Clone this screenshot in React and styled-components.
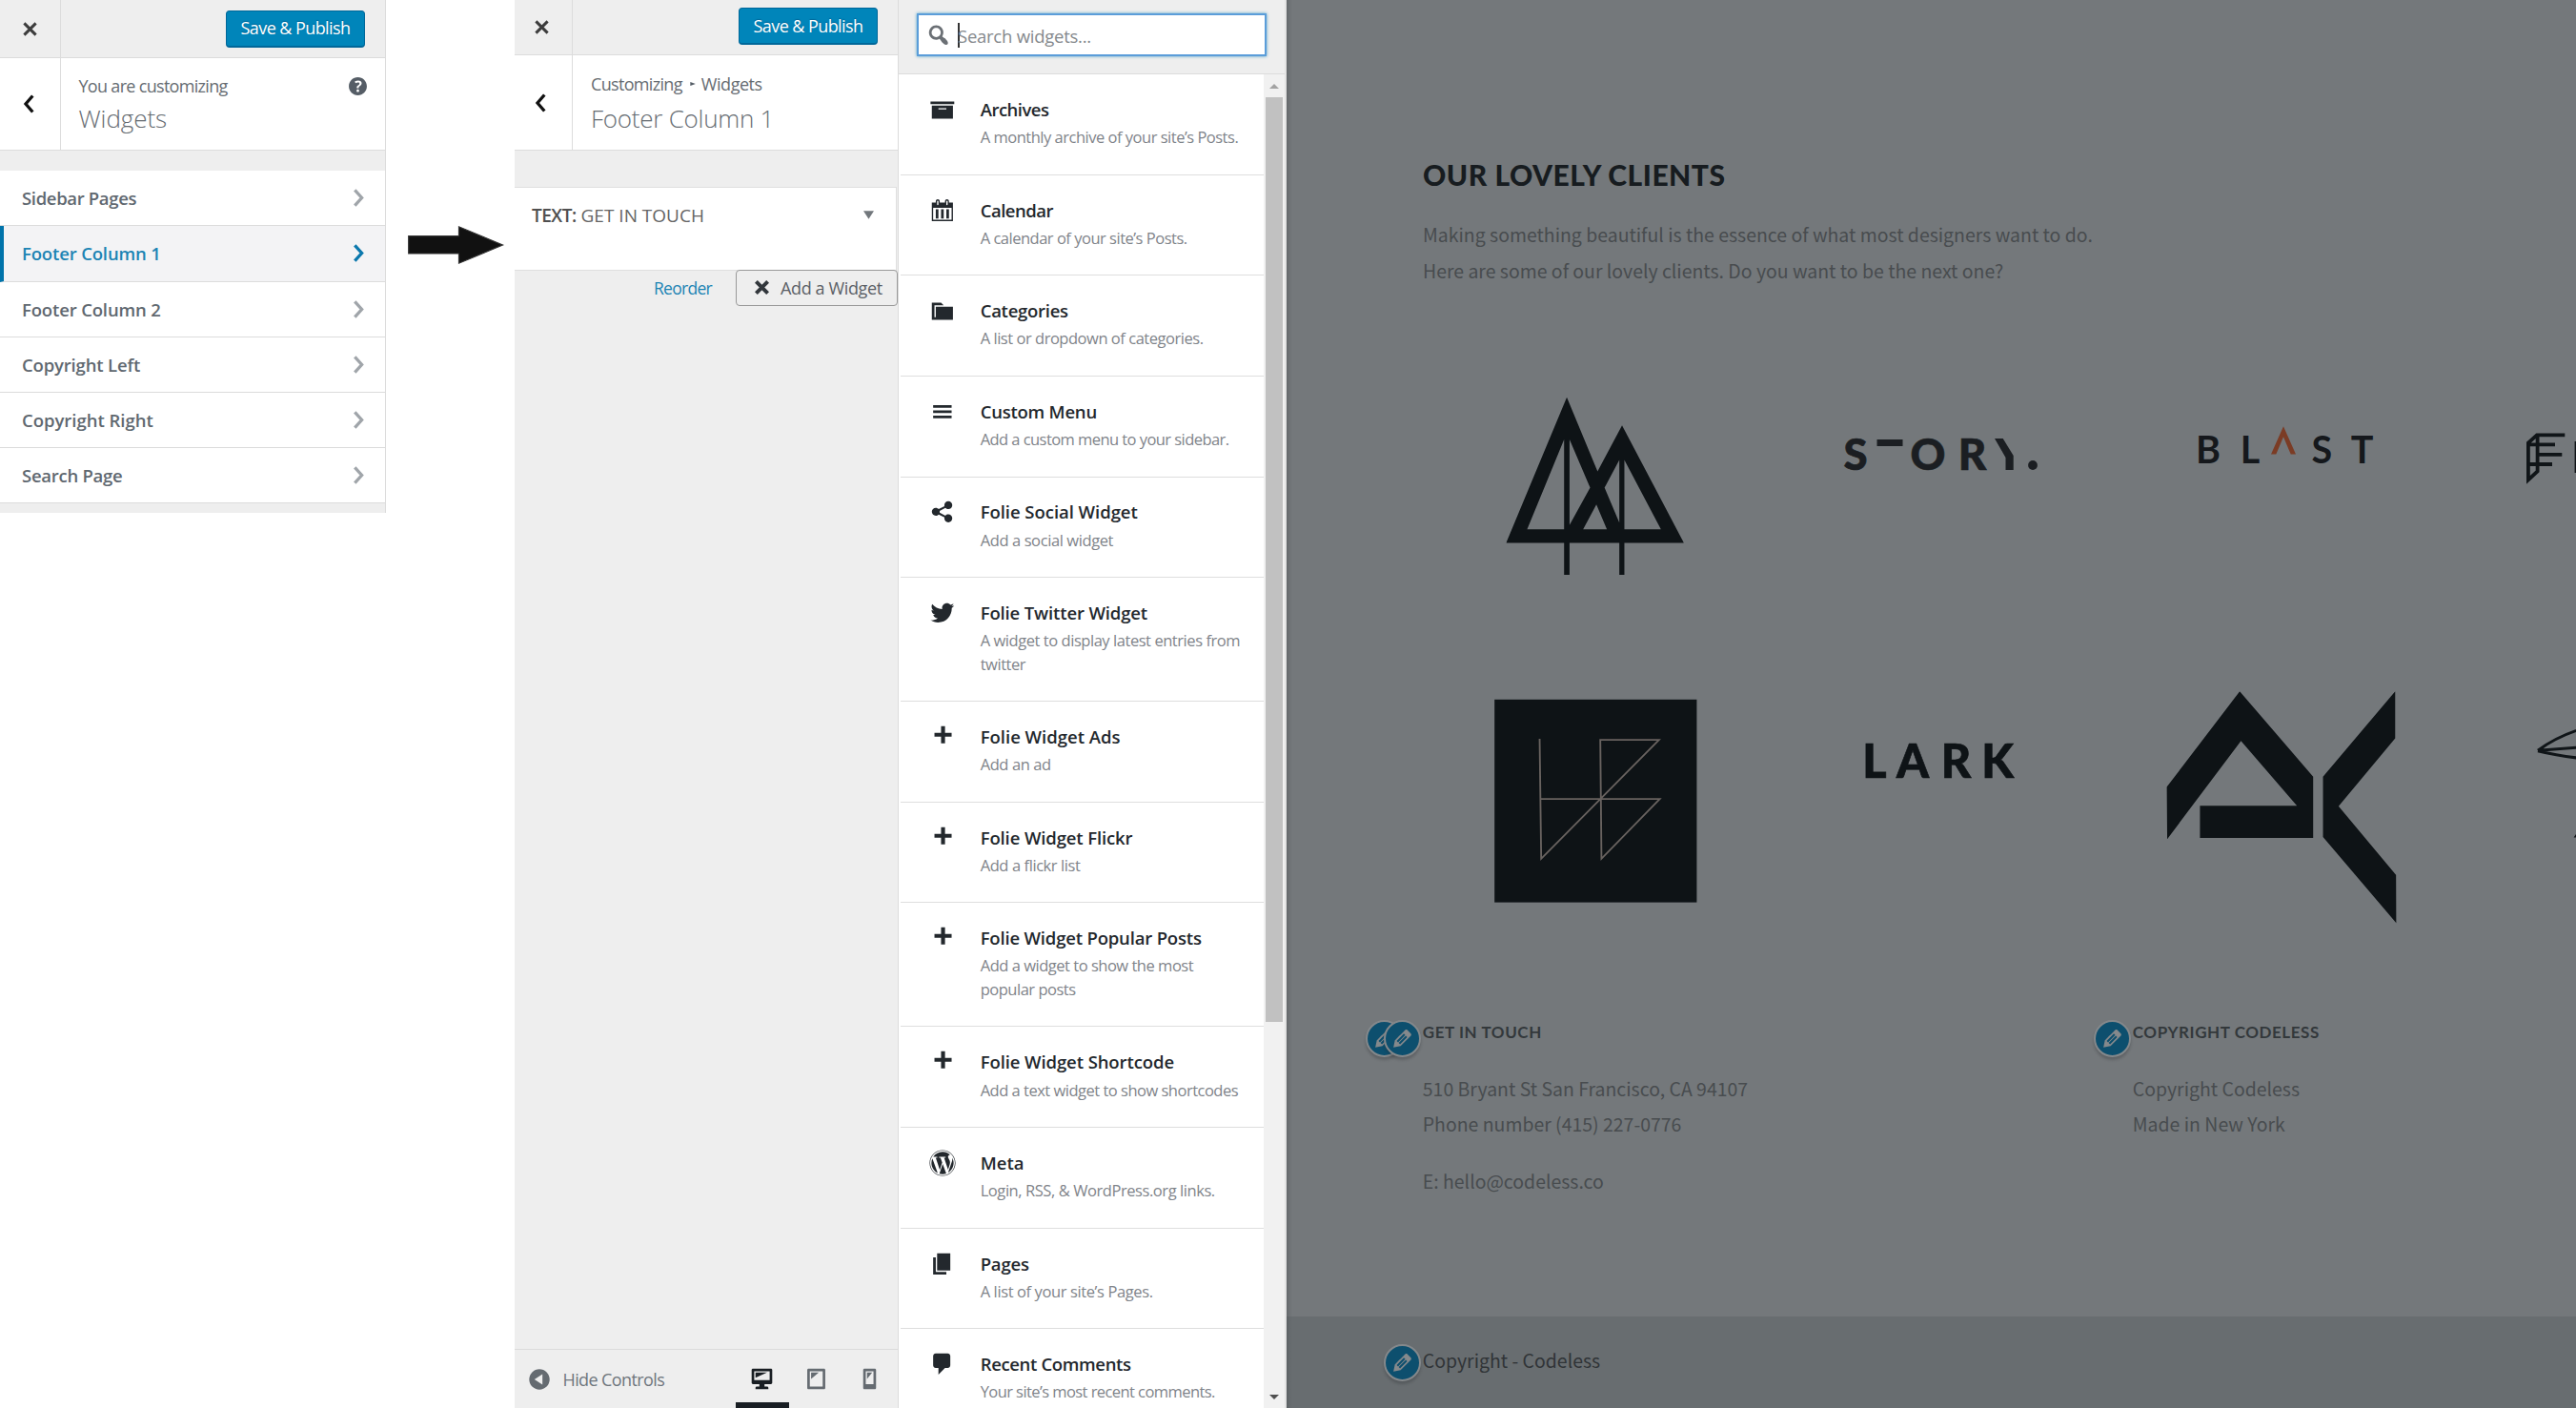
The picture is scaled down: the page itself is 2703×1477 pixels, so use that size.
import React from 'react';
import styled, { createGlobalStyle, css } from 'styled-components';
import { FaWordpress } from 'react-icons/fa';

const uiFont = '"Open Sans", "Noto Sans", sans-serif';
const headFont = 'Lato, Inter, sans-serif';
const bodyFont = '"Noto Sans CJK SC", "Open Sans", sans-serif';

const GlobalStyle = createGlobalStyle`
  * { box-sizing: border-box; }
  body { margin: 0; background: #fff; }
  h1, h2, h3, p, ul { margin: 0; padding: 0; font-weight: inherit; }
`;

const Page = styled.div`
  display: flex;
  align-items: flex-start;
  width: 2703px;
  height: 1477px;
  overflow: hidden;
  background: #fff;
  font-family: ${uiFont};
`;

const Text = styled.span`
  letter-spacing: ${(p) => p.$track || 0}px;
  white-space: nowrap;
`;

/* ---------- customizer panels ---------- */

const Panel = styled.section`
  display: flex;
  flex-direction: column;
  flex: none;
  width: ${(p) => p.$width}px;
  height: ${(p) => p.$height}px;
  background: #eee;
  border-right: 1px solid #dcdcdc;
`;

const TopBar = styled.header`
  display: flex;
  align-items: center;
  justify-content: space-between;
  flex: none;
  height: ${(p) => p.$height}px;
  padding-right: 21px;
  border-bottom: 1px solid #dcdcdc;
`;

const SideCell = styled.div`
  display: flex;
  align-items: center;
  justify-content: center;
  align-self: stretch;
  flex: none;
  width: ${(p) => p.$width}px;
  padding-right: ${(p) => p.$shift || 0}px;
  border-right: 1px solid #dcdcdc;
`;

const SaveButton = styled.button`
  width: 146px;
  height: 39px;
  margin: 0;
  padding: 0 0 1px;
  border: 1px solid #006799;
  border-bottom-width: 2px;
  border-radius: 4px;
  background: #0085ba;
  color: #fff;
  font: 500 18px/34px ${uiFont};
  text-shadow: 0 -1px 1px #006799;
  transform: translateY(${(p) => p.$lift || 0}px);
`;

const PanelHead = styled.div`
  display: flex;
  flex: none;
  height: ${(p) => p.$height}px;
  background: #fff;
  border-bottom: 1px solid #dcdcdc;
`;

const HeadText = styled.div`
  flex: 1;
  padding: ${(p) => p.$top}px 0 0 19px;
  color: #666c72;
`;

const Crumbs = styled.p`
  display: flex;
  align-items: center;
  font-size: 18px;
  line-height: 24px;
`;

const CrumbArrow = styled.svg`
  width: 6px;
  height: 6px;
  margin: 0 6px 0 8px;
  fill: #555d66;
`;

const PanelTitle = styled.h2`
  margin-top: ${(p) => p.$gap}px;
  font-size: 26px;
  font-weight: 300;
  line-height: 34px;
`;

const HelpCell = styled.div`
  padding: 16px 15px 0 0;
`;

const SectionList = styled.ul`
  list-style: none;
  margin-top: 21.7px;
`;

const SectionItem = styled.li`
  display: flex;
  align-items: center;
  justify-content: space-between;
  height: 58.2px;
  padding: 0 22px 0 23px;
  border-bottom: 1px solid #dcdcdc;
  background: #fff;
  color: #606870;
  font-size: 18.5px;
  font-weight: 600;
  svg { stroke: #a0a5aa; }
  ${(p) => p.$active && css`
    padding-left: 19px;
    border-left: 4px solid #0073aa;
    background: #f3f3f5;
    color: #1c84b4;
    svg { stroke: #0b78ad; }
  `}
`;

const ArrowSlot = styled.div`
  flex: none;
  width: 135px;
  padding: 236px 0 0 23px;
  line-height: 0;
`;

/* ---------- widget section panel ---------- */

const WidgetCard = styled.div`
  flex: none;
  width: 401px;
  height: 88px;
  margin-top: 37.5px;
  border: solid #dfdfdf;
  border-width: 1px 1px 1px 0;
  background: #fff;
`;

const WidgetCardHead = styled.div`
  display: flex;
  align-items: center;
  justify-content: space-between;
  height: 58px;
  padding: 0 23px 0 18px;
  font-size: 19px;
  color: #646464;
  strong { font-weight: 600; color: #505050; }
`;

const WidgetActions = styled.div`
  display: flex;
  align-items: center;
  justify-content: flex-end;
  flex: none;
  margin-top: -1px;
`;

const ReorderLink = styled.a`
  margin-right: 25px;
  color: #1c84b4;
  font-size: 17.5px;
`;

const AddButton = styled.button`
  display: flex;
  align-items: center;
  width: 170px;
  height: 38px;
  padding: 0 0 0 19px;
  border: 1.5px solid #999;
  border-radius: 4px;
  background: #eee;
  color: #5b6066;
  font: 400 18px/24px ${uiFont};
  svg { margin-right: 12px; }
`;

const PanelFooter = styled.footer`
  display: flex;
  align-items: center;
  flex: none;
  height: 62px;
  margin-top: auto;
  padding: 0 1px 0 15px;
  border-top: 1px solid #dcdcdc;
  color: #6f767d;
  font-size: 18px;
`;

const HideControls = styled.div`
  display: flex;
  align-items: center;
  gap: 13.5px;
  flex: 1;
  padding-top: 1px;
`;

const DeviceButton = styled.div`
  display: flex;
  align-items: center;
  justify-content: center;
  width: 56.5px;
  height: 61px;
  padding-top: 6px;
  border-bottom: 6px solid ${(p) => (p.$active ? '#191e23' : 'transparent')};
  color: ${(p) => (p.$active ? '#191e23' : '#656b71')};
`;

/* ---------- available widgets ---------- */

const Available = styled.section`
  display: flex;
  flex-direction: column;
  flex: none;
  width: 407px;
  height: 1477px;
  background: #fff;
  border-right: 2px solid #e2e2e2;
`;

const SearchBar = styled.div`
  flex: none;
  height: 78px;
  padding: 14px 0 0 19px;
  background: #eee;
  border-bottom: 1px solid #dcdcdc;
`;

const SearchBox = styled.div`
  display: flex;
  align-items: center;
  width: 367px;
  height: 45px;
  padding-left: 7px;
  border: 2px solid #5b9dd9;
  background: #fff;
  box-shadow: 0 0 3px rgba(30, 140, 190, 0.8);
  color: #85898d;
  font-size: 18.5px;
`;

const Caret = styled.i`
  width: 1.5px;
  height: 26px;
  margin: 0 -1.5px 0 6.5px;
  background: #333;
`;

const SearchHint = styled(Text)`
  padding-top: 2px;
`;

const ListArea = styled.div`
  display: flex;
  flex: 1;
  min-height: 0;
`;

const WidgetList = styled.ul`
  flex: 1;
  margin-left: 2px;
  overflow: hidden;
  list-style: none;
`;

const WidgetRow = styled.li`
  display: grid;
  grid-template-columns: 27.7px 1fr;
  column-gap: 26.4px;
  align-items: start;
  padding: 24.9px 0 26.15px 29.6px;
  border-bottom: 1px solid #dedede;
  color: #23282d;
`;

const WidgetIcon = styled.span`
  margin-top: -2px;
  line-height: 0;
`;

const WidgetName = styled.h3`
  font-size: 18.5px;
  font-weight: 600;
  line-height: 24px;
`;

const WidgetDesc = styled.p`
  display: flex;
  flex-direction: column;
  margin-top: 5.2px;
  font-size: 16.5px;
  line-height: 24.4px;
  color: #7f848a;
`;

const ScrollBar = styled.div`
  display: flex;
  flex-direction: column;
  align-items: center;
  width: 22px;
  padding: 10px 0 9px;
  background: #f1f1f1;
`;

const ScrollThumb = styled.div`
  width: 18px;
  height: 970px;
  margin: 9px 0 auto;
  background: #c1c1c1;
`;

/* ---------- dimmed site preview ---------- */

const Preview = styled.main`
  display: flex;
  flex-direction: column;
  flex: 1;
  min-width: 0;
  height: 1477px;
  overflow: hidden;
  background: linear-gradient(90deg, #64686b 0, #6e7275 3px, #74787b 6px);
  font-family: ${bodyFont};
  font-size: 19.47px;
  line-height: 37.6px;
  color: #484c4f;
`;

const Intro = styled.div`
  height: 400px;
  padding: 163px 0 0 143px;
`;

const IntroTitle = styled.h1`
  margin-bottom: 24.4px;
  font: 900 30px/40px ${headFont};
  color: #171c20;
`;

const Line = styled.p`
  white-space: nowrap;
  margin-top: ${(p) => p.$gap || 0}px;
`;

const LogoGrid = styled.div`
  display: grid;
  grid-template-columns: repeat(4, 362px);
  grid-template-rows: 300px 290px;
  padding-left: 143px;
  svg { display: block; }
`;

const LogoText = styled.text`
  font-family: ${headFont};
  font-weight: ${(p) => p.$weight};
  font-size: ${(p) => p.$size}px;
  text-anchor: middle;
`;

const FooterWidgets = styled.div`
  display: grid;
  grid-template-columns: 745px 1fr;
  flex: 1;
  padding: 80.5px 0 0 142.8px;
`;

const FooterWidget = styled.div`
  position: relative;
`;

const FooterTitle = styled.h3`
  margin-bottom: 28.4px;
  font: 700 17px/24px ${headFont};
  color: #33383b;
`;

const CopyrightBar = styled.div`
  display: flex;
  align-items: center;
  height: 96px;
  padding: 0 0 4px 142.8px;
  background: linear-gradient(90deg, #5b6063 0, #64696c 3px, #686d70 6px);
  color: #303437;
`;

const CopyrightText = styled.div`
  position: relative;
`;

const EditBadge = styled.span`
  position: absolute;
  left: ${(p) => p.$left}px;
  top: ${(p) => p.$top}px;
  display: flex;
  align-items: center;
  justify-content: center;
  width: 39px;
  height: 39px;
  border: 2px solid #84888b;
  border-radius: 50%;
  background: #0d4f6e;
  color: #85898c;
  box-shadow: 0 3px 3px rgba(40, 44, 48, 0.28);
`;

/* ---------- icons on a 20-unit grid ---------- */

const glyphs = {
  archive: 'M19 4v2H1V4h18zM2 7h16v10H2V7zm11 3V9H7v1h6z',
  calendar:
    'M15 4h3v14H2V4h3V3c0-.83.67-1.5 1.5-1.5S8 2.17 8 3v1h4V3c0-.83.67-1.5 1.5-1.5S15 2.17 15 3v1zM6 3v2.5c0 .28.22.5.5.5s.5-.22.5-.5V3c0-.28-.22-.5-.5-.5S6 2.72 6 3zm7 0v2.5c0 .28.22.5.5.5s.5-.22.5-.5V3c0-.28-.22-.5-.5-.5s-.5.22-.5.5zm4 14V8H3v9h14zM7 16V9H5v7h2zm4 0V9H9v7h2zm4 0V9h-2v7h2z',
  category: 'M5 7h13v10H2V4h7l2 2H4v9h1V7z',
  menu: 'M17 7V5H3v2h14zm0 4V9H3v2h14zm0 4v-2H3v2h14z',
  share:
    'M14.5 12c1.66 0 3 1.34 3 3s-1.34 3-3 3-3-1.34-3-3c0-.24.03-.46.09-.69l-4.38-2.3c-.55.61-1.33.99-2.21.99-1.66 0-3-1.34-3-3s1.34-3 3-3c.88 0 1.66.39 2.21.99l4.38-2.3c-.06-.23-.09-.45-.09-.69 0-1.66 1.34-3 3-3s3 1.34 3 3-1.34 3-3 3c-.88 0-1.66-.39-2.21-.99l-4.38 2.3c.06.23.09.45.09.69s-.03.46-.09.69l4.38 2.3c.55-.61 1.33-.99 2.21-.99z',
  twitter:
    'M18.94 4.46c-.49.73-1.11 1.38-1.83 1.9.01.15.01.31.01.47 0 4.85-3.69 10.44-10.43 10.44-2.07 0-4-.61-5.63-1.65.29.03.58.05.88.05 1.72 0 3.3-.59 4.55-1.57-1.6-.03-2.95-1.09-3.42-2.55.22.04.45.07.69.07.33 0 .66-.05.96-.13-1.67-.34-2.94-1.82-2.94-3.6v-.04c.5.27 1.06.44 1.66.46-.98-.66-1.63-1.78-1.63-3.06 0-.67.18-1.3.5-1.84 1.81 2.22 4.51 3.68 7.56 3.83-.06-.27-.1-.55-.1-.84 0-2.02 1.65-3.66 3.67-3.66 1.06 0 2.01.44 2.68 1.16.83-.17 1.62-.47 2.33-.88-.28.85-.86 1.57-1.62 2.02.75-.08 1.45-.28 2.11-.57z',
  plus: 'M17 7v3h-5v5H9v-5H4V7h5V2h3v5h5z',
  pages: 'M6 15V2h10v13H6zm-1 1h8v2H3V5h2v11z',
  comment: 'M5 2h9c1.1 0 2 .9 2 2v7c0 1.1-.9 2-2 2h-2l-5 5v-5H5c-1.1 0-2-.9-2-2V4c0-1.1.9-2 2-2z',
  search:
    'M12.14 4.18c1.87 1.87 2.11 4.75.72 6.89.12.1.22.21.36.31.2.16.47.36.81.59.34.24.56.39.66.47.42.31.73.57.94.78.32.32.6.65.84 1 .25.35.44.69.59 1.04.14.35.21.68.18 1-.02.32-.14.59-.36.81s-.49.34-.81.36c-.31.02-.65-.04-.99-.19-.35-.14-.7-.34-1.04-.59-.35-.24-.68-.52-1-.84-.21-.21-.47-.52-.77-.93-.1-.13-.25-.35-.47-.66-.22-.32-.4-.57-.56-.78-.16-.2-.29-.35-.44-.5-2.07 1.09-4.69.76-6.44-.98-2.14-2.15-2.14-5.64 0-7.78 2.15-2.15 5.63-2.15 7.78 0zm-1.41 6.36c1.36-1.37 1.36-3.58 0-4.95-1.37-1.37-3.59-1.37-4.95 0-1.37 1.37-1.37 3.58 0 4.95 1.36 1.37 3.58 1.37 4.95 0z',
  help: 'M17 10c0-3.87-3.14-7-7-7-3.87 0-7 3.13-7 7s3.13 7 7 7c3.86 0 7-3.13 7-7zm-6.3 1.48H9.14v-.43c0-.38.08-.7.24-.98s.46-.57.88-.89c.41-.29.68-.53.81-.71.14-.18.2-.39.2-.62 0-.25-.09-.44-.28-.58-.19-.13-.45-.19-.79-.19-.58 0-1.25.15-1.99.45l-.64-1.28c.87-.49 1.8-.74 2.77-.74.81 0 1.45.2 1.92.58.48.39.71.91.71 1.55 0 .43-.09.8-.29 1.11-.19.32-.57.67-1.11 1.06-.38.28-.61.49-.71.63-.1.15-.15.34-.15.57v.47zm-1.47 2.74c-.18-.17-.27-.42-.27-.73 0-.33.08-.58.26-.75s.43-.25.77-.25c.32 0 .57.09.75.26s.27.42.27.74c0 .3-.09.55-.27.72-.18.18-.43.27-.75.27-.33 0-.58-.09-.76-.26z',
  desktop:
    'M3 2h14c.55 0 1 .45 1 1v10c0 .55-.45 1-1 1h-5v2h2c.55 0 1 .45 1 1v1H5v-1c0-.55.45-1 1-1h2v-2H3c-.55 0-1-.45-1-1V3c0-.55.45-1 1-1zm13 9V4H4v7h12zM5 5h9L5 9V5z',
  tablet:
    'M4 2h12c.55 0 1 .45 1 1v14c0 .55-.45 1-1 1H4c-.55 0-1-.45-1-1V3c0-.55.45-1 1-1zm11 14V4H5v12h10zM6 5h6l-6 5V5z',
  phone:
    'M6 2h8c.55 0 1 .45 1 1v14c0 .55-.45 1-1 1H6c-.55 0-1-.45-1-1V3c0-.55.45-1 1-1zm7 12V4H7v10h6zM8 5h4l-4 5V5z',
  edit: 'M13.89 3.39l2.71 2.72c.46.46.42 1.24.03 1.64l-8.01 8.02-5.56 1.16 1.16-5.58s7.6-7.63 7.99-8.03c.39-.39 1.22-.39 1.68.07zm-2.73 2.79l-5.59 5.61 1.11 1.11 5.54-5.65zm-2.97 8.23l5.58-5.6-1.07-1.08-5.59 5.6z',
};

const Glyph = ({ name, size = 27.7, color = 'currentColor' }) => (
  <svg width={size} height={size} viewBox="0 0 20 20" fill={color}>
    <path d={glyphs[name]} fillRule="evenodd" />
  </svg>
);

const Cross = ({ weight = 3, color = '#3c3c3c' }) => (
  <svg width="15" height="15" viewBox="0 0 15 15" stroke={color} strokeWidth={weight}>
    <path d="M1.4 1.4 13.6 13.6M13.6 1.4 1.4 13.6" />
  </svg>
);

const BackChevron = () => (
  <svg width="12" height="20" viewBox="0 0 12 20" fill="none" stroke="#111" strokeWidth="3.3">
    <path d="M10.3 1.5 3 10l7.3 8.5" />
  </svg>
);

const NextChevron = () => (
  <svg width="11" height="19" viewBox="0 0 11 19" fill="none" strokeWidth="3.3">
    <path d="M1.3 1.4 8.6 9.5 1.3 17.6" />
  </svg>
);

/* ---------- data ---------- */

const sections = [
  { name: 'Sidebar Pages', track: -0.34 },
  { name: 'Footer Column 1', track: -0.15, active: true },
  { name: 'Footer Column 2', track: -0.15 },
  { name: 'Copyright Left', track: -0.16 },
  { name: 'Copyright Right', track: -0.02 },
  { name: 'Search Page', track: -0.26 },
];

const widgets = [
  { icon: 'archive', name: 'Archives', nt: -0.5, desc: ['A monthly archive of your site’s Posts.'], dt: -0.49 },
  { icon: 'calendar', name: 'Calendar', nt: -0.5, desc: ['A calendar of your site’s Posts.'], dt: -0.49 },
  { icon: 'category', name: 'Categories', nt: -0.27, desc: ['A list or dropdown of categories.'], dt: -0.47 },
  { icon: 'menu', name: 'Custom Menu', nt: -0.23, desc: ['Add a custom menu to your sidebar.'], dt: -0.56 },
  { icon: 'share', name: 'Folie Social Widget', nt: -0.04, desc: ['Add a social widget'], dt: -0.4 },
  { icon: 'twitter', name: 'Folie Twitter Widget', nt: -0.14, desc: ['A widget to display latest entries from', 'twitter'], dt: -0.45 },
  { icon: 'plus', name: 'Folie Widget Ads', nt: 0, desc: ['Add an ad'], dt: -0.42 },
  { icon: 'plus', name: 'Folie Widget Flickr', nt: -0.12, desc: ['Add a flickr list'], dt: -0.42 },
  { icon: 'plus', name: 'Folie Widget Popular Posts', nt: -0.18, desc: ['Add a widget to show the most', 'popular posts'], dt: -0.48 },
  { icon: 'plus', name: 'Folie Widget Shortcode', nt: -0.09, desc: ['Add a text widget to show shortcodes'], dt: -0.5 },
  { icon: 'wordpress', name: 'Meta', nt: 0, desc: ['Login, RSS, & WordPress.org links.'], dt: -0.43 },
  { icon: 'pages', name: 'Pages', nt: -0.18, desc: ['A list of your site’s Pages.'], dt: -0.39 },
  { icon: 'comment', name: 'Recent Comments', nt: -0.35, desc: ['Your site’s most recent comments.'], dt: -0.57 },
];

/* ---------- client logos ---------- */

const TreesLogo = () => (
  <svg width="362" height="300" viewBox="1493 400 362 300">
    <svg x="1580.4" y="416.7" width="186.5" height="186.4" viewBox="99 96 457 487" preserveAspectRatio="none">
      <path
        fill="#0e1316"
        fillRule="evenodd"
        d="M255 96 334 299 397 173 556 495H403V583H390V495H262V583H248V495H99ZM153 458H248V212ZM262 212V446L315 344ZM331 390 297 458H358ZM390 268 352 344 390 440ZM403 268V458H497Z"
      />
    </svg>
  </svg>
);

const StoryLogo = () => (
  <svg width="362" height="300" viewBox="1855 400 362 300" fill="#1b1e22" stroke="#1b1e22">
    <LogoText x="1947" y="492.6" $size={45.5} $weight={900} strokeWidth="0.7">S</LogoText>
    <rect x="1969.5" y="461" width="27" height="7" stroke="none" />
    <LogoText x="2023" y="492.6" $size={45.5} $weight={900} strokeWidth="0.7">O</LogoText>
    <LogoText x="2069.5" y="492.6" $size={45.5} $weight={900} strokeWidth="0.7">R</LogoText>
    <path stroke="none" d="M2093 460H2101.7L2112.7 478V492.9H2104.5V480Z" />
    <circle stroke="none" cx="2133" cy="488" r="4.9" />
  </svg>
);

const BlastLogo = () => (
  <svg width="362" height="300" viewBox="2217 400 362 300" fill="#15181c">
    <LogoText x="2317" y="486.4" $size={39.5} $weight={700}>B</LogoText>
    <LogoText x="2361" y="486.4" $size={39.5} $weight={700}>L</LogoText>
    <path fill="#7b3c25" d="M2396 447.3 2409 476.4H2403.7L2396 458.3 2388.3 476.4H2383Z" />
    <LogoText x="2436.3" y="486.4" $size={39.5} $weight={700}>S</LogoText>
    <LogoText x="2478.5" y="486.4" $size={39.5} $weight={700}>T</LogoText>
  </svg>
);

const PrismLogo = () => (
  <svg width="362" height="300" viewBox="2579 400 362 300" fill="none" stroke="#101518" strokeWidth="3.8">
    <path d="M2691.3 456.3H2662L2652.9 464.5V503.5L2662.6 494.5V456.3M2653 466.3H2681M2663 476.9H2688.3M2653 487H2678" />
    <path d="M2703.5 463V496" />
  </svg>
);

const SquareLogo = () => (
  <svg width="362" height="290" viewBox="1493 700 362 290">
    <rect x="1568.2" y="733.8" width="212.2" height="212.8" fill="#0e1316" />
    <svg x="1568.2" y="733.6" width="212.2" height="213.1" viewBox="69 924 520 557" preserveAspectRatio="none">
      <path
        fill="none"
        stroke="#68625f"
        strokeWidth="4.6"
        d="M185 1032 189 1361 492 1035H341L344 1361 494 1197H189"
      />
    </svg>
  </svg>
);

const LarkLogo = () => (
  <svg width="362" height="290" viewBox="1855 700 362 290" fill="#0e1316" stroke="#0e1316" strokeWidth="0.7">
    <LogoText x="1967" y="816.3" $size={48.5} $weight={900}>L</LogoText>
    <LogoText x="2007" y="816.3" $size={48.5} $weight={900}>A</LogoText>
    <LogoText x="2052.5" y="816.3" $size={48.5} $weight={900}>R</LogoText>
    <LogoText x="2096" y="816.3" $size={48.5} $weight={900}>K</LogoText>
  </svg>
);

const AngleLogo = () => (
  <svg width="362" height="290" viewBox="2217 700 362 290">
    <svg x="2273.4" y="725.2" width="241.2" height="243.4" viewBox="280 902 723 636" preserveAspectRatio="none" fill="#0e1316">
      <path d="M510 902 741 1136V1304H385V1216H690L514 1038 282 1307 280 1165Z" />
      <path d="M999 902V1031L821 1217 1002 1406 1003 1538 772 1301V1136Z" />
    </svg>
  </svg>
);

const PlaneLogo = () => (
  <svg width="362" height="290" viewBox="2579 700 362 290" fill="none" stroke="#101518" strokeWidth="3">
    <path d="M2720 761.5C2698 767 2678 776 2663 787.3M2720 783 2663 787.3M2720 796.5C2700 795 2680 792 2663 787.8" />
    <path fill="#101518" stroke="none" d="M2700.6 878.5 2708 868V878.5Z" />
  </svg>
);

/* ---------- page ---------- */

const WidgetsPanel = () => (
  <Panel $width={405} $height={538}>
    <TopBar $height={61}>
      <SideCell $width={63.5}><Cross /></SideCell>
      <SaveButton><Text $track={-0.58}>Save &amp; Publish</Text></SaveButton>
    </TopBar>
    <PanelHead $height={96.5}>
      <SideCell $width={63.5} $shift={2}><BackChevron /></SideCell>
      <HeadText $top={17}>
        <Crumbs><Text $track={-0.69}>You are customizing</Text></Crumbs>
        <PanelTitle $gap={5}><Text $track={-0.07}>Widgets</Text></PanelTitle>
      </HeadText>
      <HelpCell><Glyph name="help" size={27} color="#555d66" /></HelpCell>
    </PanelHead>
    <SectionList>
      {sections.map((s) => (
        <SectionItem key={s.name} $active={s.active}>
          <Text $track={s.track}>{s.name}</Text>
          <NextChevron />
        </SectionItem>
      ))}
    </SectionList>
  </Panel>
);

const FooterColumnPanel = () => (
  <Panel $width={403} $height={1477}>
    <TopBar $height={58}>
      <SideCell $width={61} $shift={3}><Cross /></SideCell>
      <SaveButton $lift={-1}><Text $track={-0.58}>Save &amp; Publish</Text></SaveButton>
    </TopBar>
    <PanelHead $height={100}>
      <SideCell $width={61} $shift={5.5}><BackChevron /></SideCell>
      <HeadText $top={18}>
        <Crumbs>
          <Text $track={-0.67}>Customizing</Text>
          <CrumbArrow viewBox="0 0 6 6"><path d="M0.3 1 5.8 3 0.3 5Z" /></CrumbArrow>
          <Text $track={-0.46}>Widgets</Text>
        </Crumbs>
        <PanelTitle $gap={7}><Text $track={-0.25}>Footer Column 1</Text></PanelTitle>
      </HeadText>
    </PanelHead>
    <WidgetCard>
      <WidgetCardHead>
        <span>
          <strong><Text $track={-0.5}>TEXT:</Text></strong> <Text>GET IN TOUCH</Text>
        </span>
        <svg width="11" height="9" viewBox="0 0 11 9" fill="#72777c"><path d="M0 0.3H11L5.5 8.7Z" /></svg>
      </WidgetCardHead>
    </WidgetCard>
    <WidgetActions>
      <ReorderLink><Text $track={-0.7}>Reorder</Text></ReorderLink>
      <AddButton>
        <Cross weight={4} color="#32373c" />
        <Text $track={-0.37}>Add a Widget</Text>
      </AddButton>
    </WidgetActions>
    <PanelFooter>
      <HideControls>
        <svg width="22" height="22" viewBox="0 0 22 22">
          <circle cx="11" cy="11" r="10.7" fill="#656b71" />
          <path d="M14.2 5.6V16.4L5.8 11Z" fill="#eee" />
        </svg>
        <Text $track={-0.6}>Hide Controls</Text>
      </HideControls>
      <DeviceButton $active><Glyph name="desktop" size={27} /></DeviceButton>
      <DeviceButton><Glyph name="tablet" size={27} /></DeviceButton>
      <DeviceButton><Glyph name="phone" size={27} /></DeviceButton>
    </PanelFooter>
  </Panel>
);

const AvailableWidgets = () => (
  <Available>
    <SearchBar>
      <SearchBox>
        <Glyph name="search" size={27.5} color="#6b7075" />
        <Caret />
        <SearchHint $track={-0.25}>Search widgets...</SearchHint>
      </SearchBox>
    </SearchBar>
    <ListArea>
      <WidgetList>
        {widgets.map((w) => (
          <WidgetRow key={w.name}>
            <WidgetIcon>
              {w.icon === 'wordpress' ? <FaWordpress size={28} /> : <Glyph name={w.icon} />}
            </WidgetIcon>
            <div>
              <WidgetName><Text $track={w.nt}>{w.name}</Text></WidgetName>
              <WidgetDesc>
                {w.desc.map((d) => <Text key={d} $track={w.dt}>{d}</Text>)}
              </WidgetDesc>
            </div>
          </WidgetRow>
        ))}
      </WidgetList>
      <ScrollBar>
        <svg width="10" height="5" viewBox="0 0 10 5" fill="#a3a3a3"><path d="M5 0 10 5H0Z" /></svg>
        <ScrollThumb />
        <svg width="10" height="5" viewBox="0 0 10 5" fill="#505050"><path d="M0 0H10L5 5Z" /></svg>
      </ScrollBar>
    </ListArea>
  </Available>
);

const Badge = ({ left, top }) => (
  <EditBadge $left={left} $top={top}><Glyph name="edit" size={27} /></EditBadge>
);

const SitePreview = () => (
  <Preview>
    <Intro>
      <IntroTitle><Text $track={0.52}>OUR LOVELY CLIENTS</Text></IntroTitle>
      <Line>Making something beautiful is the essence of what most designers want to do.</Line>
      <Line>Here are some of our lovely clients. Do you want to be the next one?</Line>
    </Intro>
    <LogoGrid>
      <TreesLogo />
      <StoryLogo />
      <BlastLogo />
      <PrismLogo />
      <SquareLogo />
      <LarkLogo />
      <AngleLogo />
      <PlaneLogo />
    </LogoGrid>
    <FooterWidgets>
      <FooterWidget>
        <FooterTitle><Text $track={0.57}>GET IN TOUCH</Text></FooterTitle>
        <Line>510 Bryant St San Francisco, CA 94107</Line>
        <Line>Phone number (415) 227-0776</Line>
        <Line $gap={22}>E: hello@codeless.co</Line>
        <Badge left={-60} top={-0.5} />
        <Badge left={-40.5} top={-0.5} />
      </FooterWidget>
      <FooterWidget>
        <FooterTitle><Text $track={0.57}>COPYRIGHT CODELESS</Text></FooterTitle>
        <Line>Copyright Codeless</Line>
        <Line>Made in New York</Line>
        <Badge left={-40.5} top={-0.5} />
      </FooterWidget>
    </FooterWidgets>
    <CopyrightBar>
      <CopyrightText>
        Copyright - Codeless
        <Badge left={-40.5} top={1.5} />
      </CopyrightText>
    </CopyrightBar>
  </Preview>
);

export default function App() {
  return (
    <>
      <GlobalStyle />
      <Page>
        <WidgetsPanel />
        <ArrowSlot>
          <svg width="102" height="42" viewBox="0 0 102 42" fill="#111" stroke="#333" strokeWidth="1.2">
            <path d="M0.7 11.7H53.5V1.8L99.5 21 53.5 40.2V30H0.7Z" />
          </svg>
        </ArrowSlot>
        <FooterColumnPanel />
        <AvailableWidgets />
        <SitePreview />
      </Page>
    </>
  );
}
